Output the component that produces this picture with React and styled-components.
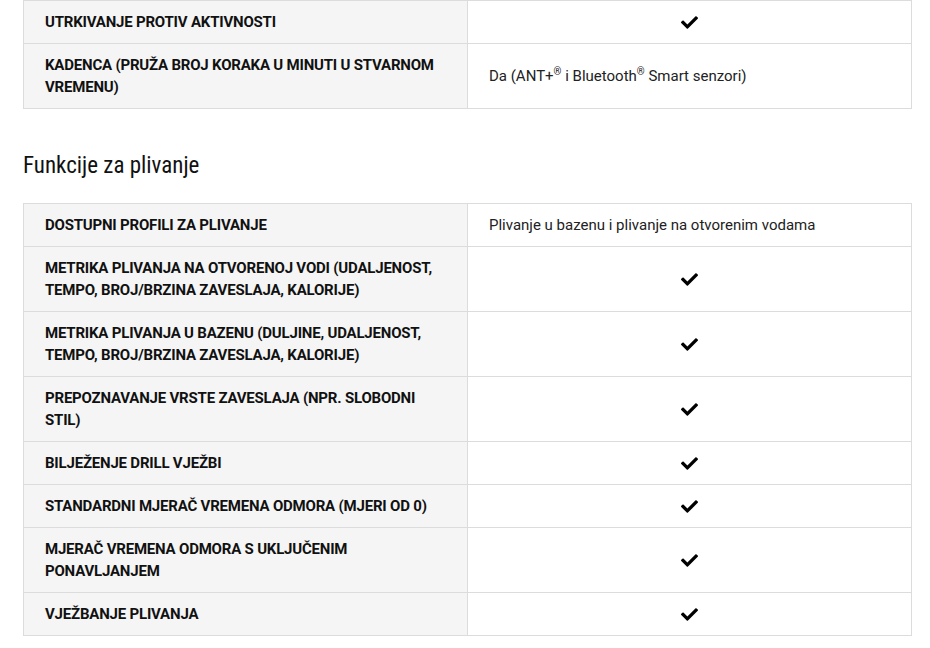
import React from "react";
import styled, { createGlobalStyle } from "styled-components";
import { FaCheck } from "react-icons/fa";

const topRows = [
  { label: "UTRKIVANJE PROTIV AKTIVNOSTI", check: true },
  {
    label: "KADENCA (PRUŽA BROJ KORAKA U MINUTI U STVARNOM VREMENU)",
    value: (
      <>
        Da (ANT+<sup>®</sup> i Bluetooth<sup>®</sup> Smart senzori)
      </>
    ),
  },
];

const swimRows = [
  {
    label: "DOSTUPNI PROFILI ZA PLIVANJE",
    value: "Plivanje u bazenu i plivanje na otvorenim vodama",
  },
  {
    label:
      "METRIKA PLIVANJA NA OTVORENOJ VODI (UDALJENOST, TEMPO, BROJ/BRZINA ZAVESLAJA, KALORIJE)",
    check: true,
  },
  {
    label:
      "METRIKA PLIVANJA U BAZENU (DULJINE, UDALJENOST, TEMPO, BROJ/BRZINA ZAVESLAJA, KALORIJE)",
    check: true,
  },
  {
    label: "PREPOZNAVANJE VRSTE ZAVESLAJA (NPR. SLOBODNI STIL)",
    check: true,
  },
  { label: "BILJEŽENJE DRILL VJEŽBI", check: true },
  { label: "STANDARDNI MJERAČ VREMENA ODMORA (MJERI OD 0)", check: true },
  { label: "MJERAČ VREMENA ODMORA S UKLJUČENIM PONAVLJANJEM", check: true },
  { label: "VJEŽBANJE PLIVANJA", check: true },
];

// 스펙 테이블
const SpecTable = ({ rows }) => (
  <Table>
    <colgroup>
      <Col />
      <Col />
    </colgroup>
    <tbody>
      {rows.map((row) => (
        <tr key={row.label}>
          <LabelCell>{row.label}</LabelCell>
          <ValueCell $center={row.check}>
            {row.check ? <FaCheck size={17} /> : row.value}
          </ValueCell>
        </tr>
      ))}
    </tbody>
  </Table>
);

const App = () => (
  <>
    <GlobalStyle />
    <Page>
      <SpecTable rows={topRows} />
      <SectionTitle>Funkcije za plivanje</SectionTitle>
      <SpecTable rows={swimRows} />
    </Page>
  </>
);

// 스타일 컴포넌트
const GlobalStyle = createGlobalStyle`
  body {
    margin: 0;
    background: #fff;
    font-family: Roboto, "Liberation Sans", Arial, sans-serif;
    color: #1a1a1a;
  }
`;

const Page = styled.div`
  width: 889px;
  margin-left: 23px;
`;

const Table = styled.table`
  width: 100%;
  border-collapse: collapse;
  table-layout: fixed;
`;

const Col = styled.col`
  width: 50%;
`;

const Cell = styled.td`
  border: 1px solid #dcdcdc;
  padding: 10px 21px;
  font-size: 15px;
  line-height: 22px;
  vertical-align: middle;
`;

const LabelCell = styled(Cell)`
  background: #f5f5f5;
  font-weight: 700;
  letter-spacing: -0.2px;
  color: #111;
`;

const ValueCell = styled(Cell)`
  text-align: ${(props) => (props.$center ? "center" : "left")};
  color: #222;

  svg {
    display: inline-block;
    vertical-align: -3.5px;
    color: #000;
  }

  sup {
    font-size: 10px;
    line-height: 0;
    vertical-align: 6px;
  }
`;

const SectionTitle = styled.h2`
  margin: 44px 0 24px;
  font-family: "Roboto Condensed", "Liberation Sans Narrow", "DejaVu Sans Condensed", sans-serif;
  font-weight: 400;
  font-size: 23px;
  line-height: 26px;
  color: #111;
`;

export default App;
